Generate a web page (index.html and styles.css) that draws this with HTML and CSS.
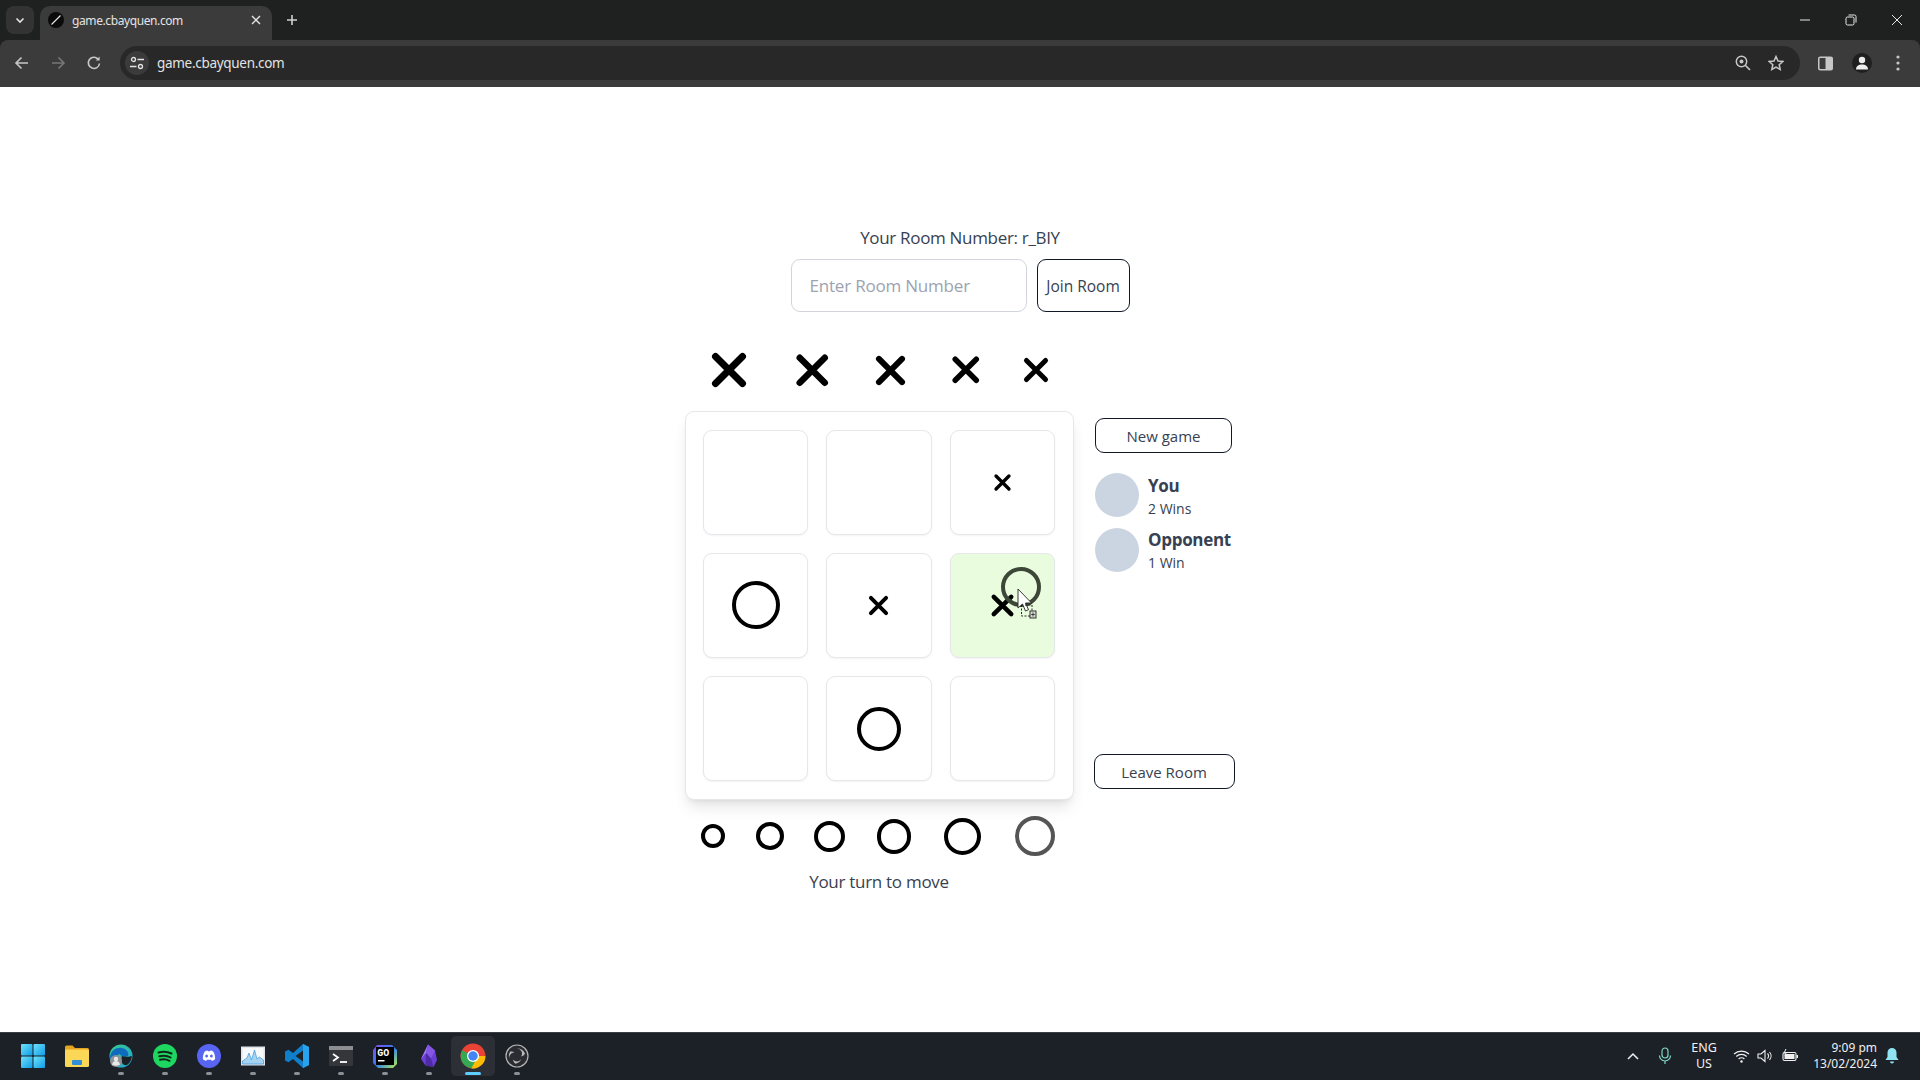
FILE: index.html
```html
<!DOCTYPE html>
<html lang="en">
<head>
    <meta charset="UTF-8">
    <title>game.cbayquen.com</title>
    <link rel="stylesheet" href="styles.css">
</head>
<body>
    <svg class="defs" width="0" height="0">
        <symbol id="cross" viewBox="0 0 48 48">
            <path d="M10.500 10.500L37.500 37.500M37.500 10.500L10.500 37.500" fill="none" stroke="#000" stroke-width="7" stroke-linecap="round"/>
        </symbol>
    </svg>

    <!-- browser window -->
    <header class="browser">
        <div class="tabstrip">
            <div class="tab-menu">
                <svg width="12" height="12" viewBox="0 0 12 12"><path d="M2.5 4.5L6 8l3.5-3.5" fill="none" stroke="#e3e3e3" stroke-width="1.6"/></svg>
            </div>
            <div class="tab">
                <svg class="favicon" width="16" height="16" viewBox="0 0 16 16"><circle cx="8" cy="8" r="8" fill="#0b0b0b"/><path d="M3.5 12.5L12.5 3.5" stroke="#eee" stroke-width="1.1"/></svg>
                <span class="tab-title">game.cbayquen.com</span>
                <svg class="tab-close" width="10" height="10" viewBox="0 0 10 10"><path d="M1 1l8 8M9 1l-8 8" stroke="#e3e3e3" stroke-width="1.4"/></svg>
            </div>
            <svg class="new-tab" width="12" height="12" viewBox="0 0 12 12"><path d="M6 1v10M1 6h10" stroke="#d0d0d0" stroke-width="1.6"/></svg>
            <div class="window-controls">
                <svg width="12" height="12" viewBox="0 0 12 12"><path d="M1 6h10" stroke="#e8e8e8" stroke-width="1"/></svg>
                <svg width="12" height="12" viewBox="0 0 12 12"><rect x="1" y="3" width="8" height="8" rx="1.5" fill="none" stroke="#e8e8e8"/><path d="M3.5 1h6a1.5 1.5 0 0 1 1.5 1.5v6" fill="none" stroke="#e8e8e8"/></svg>
                <svg width="12" height="12" viewBox="0 0 12 12"><path d="M1 1l10 10M11 1L1 11" stroke="#e8e8e8" stroke-width="1"/></svg>
            </div>
        </div>
        <div class="toolbar">
            <button class="tool-btn"><svg width="16" height="16" viewBox="0 0 16 16"><path d="M14 8H2.5M7.5 2.5L2 8l5.5 5.5" fill="none" stroke="#c7c7c7" stroke-width="1.6"/></svg></button>
            <button class="tool-btn"><svg width="16" height="16" viewBox="0 0 16 16"><path d="M2 8h11.5M8.500 2.500L14 8l-5.500 5.500" fill="none" stroke="#777" stroke-width="1.600"/></svg></button>
            <button class="tool-btn"><svg width="16" height="16" viewBox="0 0 16 16"><path d="M13.500 8.500A5.600 5.600 0 1 1 12 4" fill="none" stroke="#c7c7c7" stroke-width="1.600"/><path d="M13.600 1.500v4h-4z" fill="#c7c7c7"/></svg></button>
            <div class="omnibox">
                <span class="site-icon">
                    <svg width="14" height="14" viewBox="0 0 14 14"><circle cx="3.500" cy="3.500" r="2" fill="none" stroke="#e3e3e3" stroke-width="1.300"/><path d="M7.500 3.500H14M0 10.500h6.500" stroke="#e3e3e3" stroke-width="1.300"/><circle cx="10.500" cy="10.500" r="2" fill="none" stroke="#e3e3e3" stroke-width="1.300"/></svg>
                </span>
                <span class="url">game.cbayquen.com</span>
                <svg class="omni-zoom" width="16" height="16" viewBox="0 0 16 16"><circle cx="6.500" cy="6.500" r="5.200" fill="none" stroke="#c7c7c7" stroke-width="1.500"/><circle cx="6.500" cy="6.500" r="2" fill="#c7c7c7"/><path d="M10.500 10.500L15 15" stroke="#c7c7c7" stroke-width="1.700"/></svg>
                <svg class="omni-star" width="16" height="16" viewBox="0 0 16 16"><path d="M8 1.500l2 4.500 4.800.5-3.600 3.200 1 4.800L8 12.100l-4.200 2.400 1-4.800L1.200 6.500 6 6z" fill="none" stroke="#c7c7c7" stroke-width="1.500"/></svg>
            </div>
            <div class="tool-right">
                <svg width="15" height="15" viewBox="0 0 15 15"><rect x=".75" y="1.250" width="13.500" height="12.500" rx="1.500" fill="none" stroke="#c7c7c7" stroke-width="1.500"/><rect x="7.500" y="1.250" width="6.700" height="12.500" fill="#c7c7c7"/></svg>
                <span class="profile"><svg width="14" height="14" viewBox="0 0 14 14"><circle cx="7" cy="4" r="3.200" fill="#eee"/><path d="M1 13.500c0-3.500 2.500-5 6-5s6 1.500 6 5z" fill="#eee"/></svg></span>
                <svg width="4" height="16" viewBox="0 0 4 16"><circle cx="2" cy="2" r="1.600" fill="#c7c7c7"/><circle cx="2" cy="8" r="1.600" fill="#c7c7c7"/><circle cx="2" cy="14" r="1.600" fill="#c7c7c7"/></svg>
            </div>
        </div>
    </header>

    <main class="page">
        <p class="room-number">Your Room Number: r_BIY</p>
        <div class="join-row">
            <input class="room-input" type="text" placeholder="Enter Room Number">
            <button class="btn join-btn">Join Room</button>
        </div>

        <div class="game">
            <div class="x-pieces">
                <svg class="x-piece x1"><use href="#cross"/></svg>
                <svg class="x-piece x2"><use href="#cross"/></svg>
                <svg class="x-piece x3"><use href="#cross"/></svg>
                <svg class="x-piece x4"><use href="#cross"/></svg>
                <svg class="x-piece x5"><use href="#cross"/></svg>
            </div>

            <div class="board">
                <div class="cell"></div>
                <div class="cell"></div>
                <div class="cell"><svg class="cross-sm"><use href="#cross"/></svg></div>
                <div class="cell"><span class="circle o-lg"></span></div>
                <div class="cell"><svg class="cross-md"><use href="#cross"/></svg></div>
                <div class="cell cell-hover">
                    <svg class="cross-lg"><use href="#cross"/></svg>
                    <span class="circle o-drag"></span>
                    <svg class="drag-cursor" width="20" height="32" viewBox="0 0 20 32">
                        <path d="M1 1v19l4.500-4 3 7 3-1.300-3-6.700h6z" fill="#fff" stroke="#222" stroke-width=".9"/>
                        <path d="M4.500 17v11h10" fill="none" stroke="#222" stroke-dasharray="2 1.500"/>
                        <path d="M8 17h7v6" fill="none" stroke="#222" stroke-dasharray="2 1.500"/>
                        <rect x="13" y="23" width="6" height="7" fill="#d8dcd4" stroke="#222" stroke-width=".9"/>
                        <path d="M16 24.500v4M14.200 26.500h3.600" stroke="#222" stroke-width=".8"/>
                    </svg>
                </div>
                <div class="cell"></div>
                <div class="cell"><span class="circle o-md"></span></div>
                <div class="cell"></div>
            </div>

            <aside class="side">
                <button class="btn side-btn new-game">New game</button>
                <div class="player player-first">
                    <span class="avatar"></span>
                    <div>
                        <div class="player-name">You</div>
                        <div class="player-wins">2 Wins</div>
                    </div>
                </div>
                <div class="player">
                    <span class="avatar"></span>
                    <div>
                        <div class="player-name">Opponent</div>
                        <div class="player-wins">1 Win</div>
                    </div>
                </div>
                <button class="btn side-btn leave-room">Leave Room</button>
            </aside>

            <div class="o-pieces">
                <span class="circle o1"></span>
                <span class="circle o2"></span>
                <span class="circle o3"></span>
                <span class="circle o4"></span>
                <span class="circle o5"></span>
                <span class="circle o6"></span>
            </div>
            <p class="turn">Your turn to move</p>
        </div>
    </main>

    <footer class="taskbar">
        <div class="task-icons">
            <span class="task-item">
                <svg width="24" height="24" viewBox="0 0 24 24"><defs><linearGradient id="winBlue" x1="0" y1="0" x2="1" y2="1"><stop offset="0" stop-color="#6fe3f8"/><stop offset="1" stop-color="#0f9be8"/></linearGradient></defs><rect x="0" y="0" width="11.500" height="11.500" rx="1" fill="url(#winBlue)"/><rect x="12.500" y="0" width="11.500" height="11.500" rx="1" fill="url(#winBlue)"/><rect x="0" y="12.500" width="11.500" height="11.500" rx="1" fill="url(#winBlue)"/><rect x="12.500" y="12.500" width="11.500" height="11.500" rx="1" fill="url(#winBlue)"/></svg>
            </span>
            <span class="task-item">
                <svg width="24" height="24" viewBox="0 0 24 24"><path d="M0 3a1.500 1.500 0 0 1 1.500-1.500h6L10 4h12.500A1.500 1.500 0 0 1 24 5.500V8H0z" fill="#e6a51f"/><rect x="0" y="5.500" width="24" height="17.500" rx="1.500" fill="#fbd757"/><rect x="7" y="16" width="10" height="5" rx="1" fill="#2f8fd8"/></svg>
            </span>
            <span class="task-item open">
                <svg width="24" height="24" viewBox="0 0 24 24"><defs><linearGradient id="edgeG" x1="0" y1="0" x2="1" y2="1"><stop offset="0" stop-color="#38c98c"/><stop offset="1" stop-color="#1fa6d8"/></linearGradient></defs><circle cx="12" cy="12" r="11.500" fill="url(#edgeG)"/><path d="M1 13C2 6 8 3 13 4c5 1 7 5 6 8-2 1-8 0-8-2-3 0-5 5-3 10-4-1-7-4-7-7z" fill="#0f6cbd"/><path d="M13 12c3 1 8 1 10 0-.5 4-2 7-5 9-4 1-7-3-5-9z" fill="#1c2027"/><circle cx="7" cy="17" r="6" fill="#8e9196"/><circle cx="7" cy="15" r="2.200" fill="#e8e8e8"/><path d="M3 20.500c.500-2.500 2-3.500 4-3.500s3.500 1 4 3.500c-2 1.500-6 1.500-8 0z" fill="#e8e8e8"/></svg>
            </span>
            <span class="task-item open">
                <svg width="24" height="24" viewBox="0 0 24 24"><circle cx="12" cy="12" r="12" fill="#1ed760"/><path d="M5.500 8.500c4.500-1.300 9-1 13 1M6.300 12.300c3.800-1 8-.8 11.300 1.200M7 15.800c3.200-.8 6.500-.6 9.500 1" fill="none" stroke="#11271a" stroke-width="2" stroke-linecap="round"/></svg>
            </span>
            <span class="task-item open">
                <svg width="24" height="24" viewBox="0 0 24 24"><circle cx="12" cy="12" r="12" fill="#5865f2"/><path d="M7.800 7.500c1-.5 2-.8 2.800-.9l.3.700h2.200l.3-.7c.9.100 1.900.4 2.800.9 1.500 2.300 2.100 5 1.900 7.800-1 .8-2.100 1.300-3.200 1.600l-.7-1.200H9.800l-.7 1.200c-1.100-.3-2.200-.8-3.200-1.600-.2-2.800.4-5.500 1.900-7.800z" fill="#fff"/><ellipse cx="9.600" cy="12" rx="1.400" ry="1.600" fill="#5865f2"/><ellipse cx="14.400" cy="12" rx="1.400" ry="1.600" fill="#5865f2"/></svg>
            </span>
            <span class="task-item open">
                <svg width="24" height="24" viewBox="0 0 24 24"><rect x="0" y="2.500" width="24" height="19" fill="#dfe5ea"/><rect x="1.500" y="4" width="21" height="16" fill="#f7f9fb"/><path d="M1.500 17L6 14l2-5 2.500 7 3-10 2.500 9 2.500-2 4 3v4h-21z" fill="#a4d4f2" stroke="#3d94d8" stroke-width=".7"/></svg>
            </span>
            <span class="task-item open">
                <svg width="24" height="24" viewBox="0 0 24 24"><path d="M18 0l6 3v18l-6 3-10-9-4.500 3.300L0 16.500v-9l3.500-1.800L8 9z" fill="#0f7fcc"/><path d="M18 6.500L10.500 12l7.500 5.500z" fill="#1c2027"/><path d="M18 0l6 3v18l-6 3z" fill="#28a4ee"/></svg>
            </span>
            <span class="task-item open">
                <svg width="24" height="24" viewBox="0 0 24 24"><rect x="0" y="2" width="24" height="20" rx="1.500" fill="#34363a"/><rect x="0" y="2" width="24" height="4" fill="#8c8e91"/><path d="M4 10l5 3.500L4 17" fill="none" stroke="#fff" stroke-width="1.800"/><path d="M11 18h7" stroke="#fff" stroke-width="1.800"/></svg>
            </span>
            <span class="task-item open">
                <svg width="24" height="24" viewBox="0 0 24 24"><defs><linearGradient id="goG" x1="0" y1="0" x2="1" y2="1"><stop offset="0" stop-color="#8a4cf0"/><stop offset=".5" stop-color="#2d7df0"/><stop offset="1" stop-color="#b8f04a"/></linearGradient></defs><path d="M4 1h15l5 5v14l-4 4H5l-5-5V6z" fill="url(#goG)"/><rect x="3" y="3" width="18" height="18" fill="#000"/><text x="4.200" y="11.500" class="goland-label">GO</text><rect x="5" y="16" width="6.500" height="1.500" fill="#fff"/></svg>
            </span>
            <span class="task-item open">
                <svg width="24" height="24" viewBox="0 0 24 24"><path d="M11 0.500L18 6.500l2 9.500-3.500 7-8-1.500L4 15z" fill="#6c3fd4"/><path d="M11 .5L9 9l-5 6z" fill="#9d7df2"/><path d="M11 .5L18 6.500l-4 8L9 9z" fill="#8556e6"/><path d="M9 9l5 5.500 2.500 8.500-8-1.500z" fill="#4e2ba6"/></svg>
            </span>
            <span class="task-item open active">
                <svg width="26" height="26" viewBox="0 0 24 24"><circle cx="12" cy="12" r="11.500" fill="#ea4335"/><path d="M12 12L1.900 6.600A11.500 11.500 0 0 0 12 23.500l5.700-9.800z" fill="#34a853"/><path d="M12 12h11.500A11.500 11.500 0 0 1 10.500 23.400l5-9.500z" fill="#fbbc04"/><circle cx="12" cy="12" r="5.600" fill="#fff"/><circle cx="12" cy="12" r="4.400" fill="#4285f4"/></svg>
            </span>
            <span class="task-item open">
                <svg width="24" height="24" viewBox="0 0 24 24"><circle cx="12" cy="12" r="11" fill="#2a2c31" stroke="#b5b5b5" stroke-width="1.200"/><path d="M12 4.500a5 5 0 0 1 4 8c2-.500 3.500-1.500 4-3a8.500 8.500 0 0 0-8-5zM5 16a5 5 0 0 1 4.500-7.500C8 7.500 6.500 7.200 5 7.800A8.500 8.500 0 0 0 5 16zM16.500 14.500a5 5 0 0 1-8.500 1c.3 2 1.200 3.500 2.500 4.300a8.500 8.500 0 0 0 6-5.300z" fill="#b8b8b8"/></svg>
            </span>
        </div>
        <div class="tray">
            <svg class="tray-chevron" width="12" height="8" viewBox="0 0 12 8"><path d="M1 7l5-5 5 5" fill="none" stroke="#f0f0f0" stroke-width="1.500"/></svg>
            <svg class="tray-mic" width="14" height="18" viewBox="0 0 14 18"><rect x="4" y="1" width="6" height="10" rx="3" fill="none" stroke="#7fd8c8" stroke-width="1.200"/><path d="M1.500 8.500a5.500 5.500 0 0 0 11 0M7 14v3" fill="none" stroke="#7fd8c8" stroke-width="1.200"/></svg>
            <div class="tray-lang">ENG<br>US</div>
            <svg class="tray-wifi" width="17" height="14" viewBox="0 0 17 14"><path d="M1 5a11 11 0 0 1 15 0M3.300 7.500a7.600 7.600 0 0 1 10.400 0M5.600 10a4.200 4.200 0 0 1 5.800 0" fill="none" stroke="#f0f0f0" stroke-width="1.200"/><circle cx="8.500" cy="12.500" r="1.200" fill="#f0f0f0"/></svg>
            <svg class="tray-sound" width="17" height="14" viewBox="0 0 17 14"><path d="M1 5h3l4-3.500v11L4 9H1z" fill="none" stroke="#f0f0f0" stroke-width="1.100"/><path d="M10.500 4.500a3.500 3.500 0 0 1 0 5M12.500 3a6 6 0 0 1 0 8" fill="none" stroke="#f0f0f0" stroke-width="1.100"/></svg>
            <svg class="tray-battery" width="17" height="14" viewBox="0 0 17 14"><rect x="1" y="3.500" width="13" height="8" rx="1.500" fill="none" stroke="#f0f0f0" stroke-width="1.100"/><rect x="2.500" y="5" width="10" height="5" fill="#f0f0f0"/><rect x="14.500" y="6" width="1.500" height="3" fill="#f0f0f0"/><path d="M4 0L2 4h2L3 7" fill="none" stroke="#f0f0f0"/></svg>
            <div class="tray-clock">9:09 pm<br>13/02/2024</div>
            <svg class="tray-bell" width="14" height="16" viewBox="0 0 14 16"><path d="M7 0a4.500 4.500 0 0 1 4.500 4.500V9l2 3H.5l2-3V4.500A4.500 4.500 0 0 1 7 0z" fill="#8fe3f2"/><path d="M5 13.500h4a2 2 0 0 1-4 0z" fill="#8fe3f2"/></svg>
        </div>
    </footer>
</body>
</html>
```

FILE: styles.css
```css
:root {
    --frame: #1f2020;
    --toolbar: #3b3b3b;
    --omnibox: #282828;
    --chrome-text: #e3e3e3;
    --taskbar: #1c2027;
    --line: #e5e7eb;
    --text: #374151;
}

* {
    box-sizing: border-box;
}

body {
    margin: 0;
    height: 1080px;
    display: flex;
    flex-direction: column;
    overflow: hidden;
    background: white;
    font-family: 'Open Sans', 'Noto Sans', sans-serif;
    color: var(--text);
}

.defs {
    position: absolute;
}

/* browser window */
.browser {
    height: 87px;
    background: var(--frame);
    font-family: 'Noto Sans', sans-serif;
    color: var(--chrome-text);
}

.tabstrip {
    height: 40px;
    display: flex;
    align-items: flex-end;
}

.tab-menu {
    width: 28px;
    height: 28px;
    margin: 0 6px 6px 6px;
    background: #333;
    border-radius: 8px;
    display: flex;
    align-items: center;
    justify-content: center;
}

.tab {
    width: 232px;
    height: 34px;
    background: var(--toolbar);
    border-radius: 10px 10px 0 0;
    display: flex;
    align-items: center;
    padding: 0 11px 6px 8px;
}

.favicon {
    flex: none;
}

.tab-title {
    margin-left: 8px;
    font-size: 12px;
    letter-spacing: -0.4px;
    flex: 1;
}

.new-tab {
    margin: 0 0 14px 14px;
}

.window-controls {
    margin-left: auto;
    width: 138px;
    height: 40px;
    display: flex;
    align-items: center;
    justify-content: space-between;
    padding: 0 17px;
}

.toolbar {
    height: 47px;
    background: var(--toolbar);
    border-radius: 8px 8px 0 0;
    display: flex;
    align-items: center;
    padding: 0 0 1px 4px;
}

.tool-btn {
    width: 36px;
    height: 36px;
    padding: 0;
    background: none;
    border: none;
    display: flex;
    align-items: center;
    justify-content: center;
}

.omnibox {
    width: 1680px;
    height: 34px;
    margin-left: 8px;
    background: var(--omnibox);
    border-radius: 17px;
    display: flex;
    align-items: center;
    padding: 0 16px 0 5px;
}

.site-icon {
    width: 24px;
    height: 24px;
    border-radius: 50%;
    background: #3b3b3b;
    display: flex;
    align-items: center;
    justify-content: center;
}

.url {
    margin-left: 8px;
    font-size: 13.5px;
    letter-spacing: -0.3px;
    flex: 1;
}

.omni-star {
    margin-left: 17px;
}

.tool-right {
    flex: 1;
    display: flex;
    align-items: center;
    padding-left: 18px;
}

.profile {
    width: 20px;
    height: 20px;
    margin: 0 24px 0 19px;
    border-radius: 50%;
    background: #1f1f1f;
    display: flex;
    align-items: center;
    justify-content: center;
}

/* game page */
.page {
    flex: 1;
    padding-top: 139px;
}

.room-number {
    margin: 0 0 9px 0;
    line-height: 24px;
    font-size: 17px;
    letter-spacing: -0.32px;
    text-align: center;
}

.join-row {
    display: flex;
    justify-content: center;
    gap: 10px;
}

.room-input {
    width: 236px;
    height: 53px;
    padding: 0 18px;
    border: 1px solid #d1d5db;
    border-radius: 9px;
    font-family: inherit;
    font-size: 17px;
    letter-spacing: -0.2px;
    color: var(--text);
    outline: none;
}

.room-input::placeholder {
    color: #9ca3af;
}

.btn {
    background: white;
    border: 1px solid #111827;
    border-radius: 9px;
    font-family: inherit;
    font-weight: 500;
    font-size: 15px;
    color: var(--text);
    padding: 0;
}

.join-btn {
    width: 93px;
    height: 53px;
    font-size: 15.5px;
}

.game {
    display: grid;
    grid-template-columns: 389px 142px;
    column-gap: 20px;
    justify-content: center;
    margin-top: 34px;
}

.x-pieces {
    grid-column: 1;
    height: 48px;
    display: flex;
    align-items: center;
    padding-left: 20px;
    margin-bottom: 17px;
}

.x-piece {
    flex: none;
}

.x1 { width: 48px; height: 48px; margin-right: 37px; }
.x2 { width: 44.5px; height: 44.5px; margin-right: 36px; }
.x3 { width: 41px; height: 41px; margin-right: 36px; }
.x4 { width: 37.5px; height: 37.5px; margin-right: 34px; }
.x5 { width: 34px; height: 34px; }

.board {
    grid-column: 1;
    width: 389px;
    padding: 17.5px;
    background: white;
    border: 1px solid var(--line);
    border-radius: 9px;
    box-shadow: 0 10px 15px -3px rgba(0,0,0,0.1), 0 4px 6px -4px rgba(0,0,0,0.1);
    display: grid;
    grid-template-columns: repeat(3, 105.3px);
    grid-auto-rows: 105.3px;
    gap: 18px;
}

.cell {
    position: relative;
    background: white;
    border: 1px solid var(--line);
    border-radius: 9px;
    box-shadow: 0 1px 2px rgba(0,0,0,0.05);
    display: flex;
    align-items: center;
    justify-content: center;
}

.cell-hover {
    background: #e9fcdd;
}

.cross-sm { width: 23px; height: 23px; }
.cross-md { width: 27px; height: 27px; }
.cross-lg { width: 31px; height: 31px; }

.circle {
    display: block;
    flex: none;
    border: 4px solid #000;
    border-radius: 50%;
}

.o-lg { width: 48px; height: 48px; }
.o-md { width: 44px; height: 44px; }

.o-drag {
    position: absolute;
    left: 50px;
    top: 13px;
    width: 40px;
    height: 40px;
    border-color: #3c4738;
}

.drag-cursor {
    position: absolute;
    left: 66px;
    top: 34px;
}

.side {
    grid-column: 2;
    grid-row: 2;
    height: 388px;
    padding: 7px 0 10px;
    display: flex;
    flex-direction: column;
    align-items: flex-start;
}

.side-btn {
    height: 35px;
}

.new-game {
    width: 137px;
    margin-left: 1.5px;
}

.leave-room {
    width: 141px;
    margin-top: auto;
}

.player {
    width: 137px;
    margin: 8px 0 0 1.5px;
    display: flex;
    gap: 9px;
}

.player-first {
    margin-top: 20px;
}

.avatar {
    flex: none;
    width: 44px;
    height: 44px;
    border-radius: 50%;
    background: #cbd5e1;
}

.player-name {
    margin-top: -1px;
    font-size: 17px;
    line-height: 25px;
    font-weight: 700;
    letter-spacing: -0.3px;
    white-space: nowrap;
}

.player-first .player-name {
    margin-top: 0;
}

.player-wins {
    font-size: 14px;
    line-height: 22px;
    white-space: nowrap;
}

.o-pieces {
    grid-column: 1;
    margin-top: 16.5px;
    height: 40px;
    padding-left: 16px;
    display: flex;
    align-items: center;
}

.o1 { width: 24px; height: 24px; margin-right: 31px; }
.o2 { width: 28px; height: 28px; margin-right: 30px; }
.o3 { width: 31.5px; height: 31.5px; margin-right: 31.5px; }
.o4 { width: 34.5px; height: 34.5px; margin-right: 32.5px; }
.o5 { width: 37px; height: 37px; margin-right: 34px; }
.o6 { width: 40px; height: 40px; border-color: #555; }

.turn {
    grid-column: 1;
    margin: 13.5px 0 0 0;
    line-height: 24px;
    font-size: 17px;
    letter-spacing: -0.29px;
    text-align: center;
}

/* windows taskbar */
.taskbar {
    height: 48px;
    padding-bottom: 2px;
    background: var(--taskbar);
    border-top: 1px solid #3a3d42;
    display: flex;
    align-items: center;
    justify-content: space-between;
    font-family: 'Noto Sans', sans-serif;
    color: #f0f0f0;
}

.task-icons {
    display: flex;
    padding-left: 11px;
}

.task-item {
    position: relative;
    width: 44px;
    height: 40px;
    display: flex;
    align-items: center;
    justify-content: center;
    border-radius: 5px;
}

.task-item.open::after {
    content: "";
    position: absolute;
    left: 19px;
    bottom: 1px;
    width: 6px;
    height: 3px;
    border-radius: 2px;
    background: #8c8f94;
}

.task-item.active {
    background: #2c3036;
}

.task-item.active::after {
    left: 14px;
    width: 16px;
    background: #60cdff;
}

.goland-label {
    font-family: 'Liberation Mono', monospace;
    font-size: 10px;
    font-weight: 700;
    fill: #fff;
}

.tray {
    display: flex;
    align-items: center;
    padding-right: 21px;
}

.tray-mic {
    margin-left: 19px;
}

.tray-lang {
    width: 40px;
    margin-left: 12px;
    font-size: 12.5px;
    line-height: 16px;
    text-align: center;
}

.tray-wifi {
    margin-left: 9px;
}

.tray-sound {
    margin-left: 7px;
}

.tray-battery {
    margin-left: 8px;
}

.tray-clock {
    width: 70px;
    margin-left: 8px;
    font-size: 12px;
    line-height: 16px;
    text-align: right;
}

.tray-bell {
    margin-left: 8px;
}
```
